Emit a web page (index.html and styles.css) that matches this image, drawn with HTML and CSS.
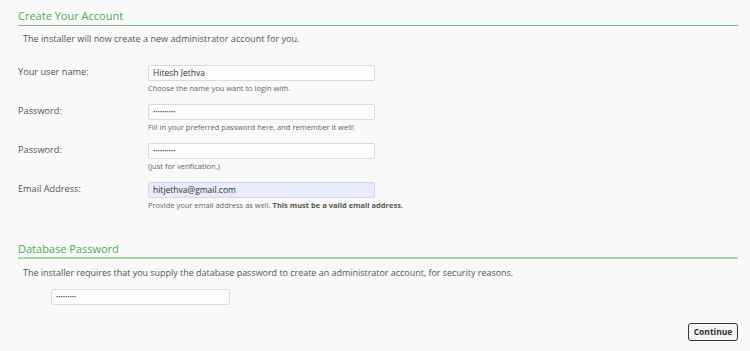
FILE: index.html
```html
<!DOCTYPE html>
<html>
<head>
<meta charset="utf-8">
<link rel="stylesheet" href="styles.css">
</head>
<body>
<div class="page">
  <section class="section">
    <h2 class="section-title">Create Your Account</h2>
    <p class="intro">The installer will now create a new administrator account for you.</p>
    <div class="form">
      <div class="row">
        <div class="label">Your user name:</div>
        <div class="field">
          <div class="input">Hitesh Jethva</div>
          <div class="hint">Choose the name you want to login with.</div>
        </div>
      </div>
      <div class="row">
        <div class="label">Password:</div>
        <div class="field">
          <div class="input dots">••••••••••</div>
          <div class="hint">Fill in your preferred password here, and remember it well!</div>
        </div>
      </div>
      <div class="row">
        <div class="label">Password:</div>
        <div class="field">
          <div class="input dots">••••••••••</div>
          <div class="hint">(just for verification.)</div>
        </div>
      </div>
      <div class="row">
        <div class="label">Email Address:</div>
        <div class="field">
          <div class="input autofill">hitjethva@gmail.com</div>
          <div class="hint">Provide your email address as well. <b>This must be a valid email address.</b></div>
        </div>
      </div>
    </div>
  </section>
  <section class="section db">
    <h2 class="section-title light">Database Password</h2>
    <p class="intro tight">The installer requires that you supply the database password to create an administrator account, for security reasons.</p>
    <div class="input dots db-input">•••••••••</div>
  </section>
  <div class="actions">
    <button class="btn">Continue</button>
  </div>
</div>
</body>
</html>
```

FILE: styles.css
```css
html, body {
  margin: 0;
  padding: 0;
  background: #f9f9f9;
}
body {
  font-family: "Open Sans", "Liberation Sans", sans-serif;
  color: #555;
}
.page {
  padding: 0 12px 0 18px;
}
.section-title {
  margin: 0;
  padding-top: 8px;
  font-size: 11px;
  line-height: 16px;
  font-weight: normal;
  color: #4dab55;
  border-bottom: 1px solid #7dbb88;
  padding-bottom: 1px;
}
.section-title.light {
  border-bottom: 2px solid #aad8ad;
  padding-bottom: 0;
}
.intro {
  margin: 6px 0 0 5px;
  font-size: 9.1px;
  line-height: 13px;
  color: #555;
}
.intro.tight {
  margin-top: 7px;
  font-size: 8.95px;
}
.form {
  margin-top: 20px;
  display: flex;
  flex-direction: column;
  gap: 10px;
}
.row {
  display: grid;
  grid-template-columns: 130px 227px;
}
.label {
  font-size: 9.2px;
  line-height: 14px;
  color: #555;
}
.input {
  box-sizing: border-box;
  height: 16px;
  border: 1px solid #dadada;
  border-radius: 2px;
  background: #fcfcfc;
  font-size: 8.5px;
  line-height: 14px;
  padding: 0 4px;
  color: #333;
}
.input.dots {
  font-size: 6px;
  letter-spacing: 0px;
  color: #444;
}
.input.autofill {
  background: #e8ebfb;
  border-color: #d3d7ea;
}
.hint {
  margin-top: 1px;
  font-size: 7.5px;
  line-height: 12px;
  color: #666;
  white-space: nowrap;
}
.hint b {
  color: #555;
}
.db {
  margin-top: 22px;
}
.db-input {
  margin: 10px 0 0 33px;
  width: 179px;
}
.actions {
  display: flex;
  justify-content: flex-end;
  margin-top: 18px;
}
.btn {
  box-sizing: border-box;
  width: 50px;
  height: 18px;
  border: 1.5px solid #333;
  border-radius: 3px;
  background: #f4f4f4;
  font-family: inherit;
  font-size: 8.5px;
  font-weight: bold;
  color: #333;
  padding: 0;
  line-height: 14px;
}
```
